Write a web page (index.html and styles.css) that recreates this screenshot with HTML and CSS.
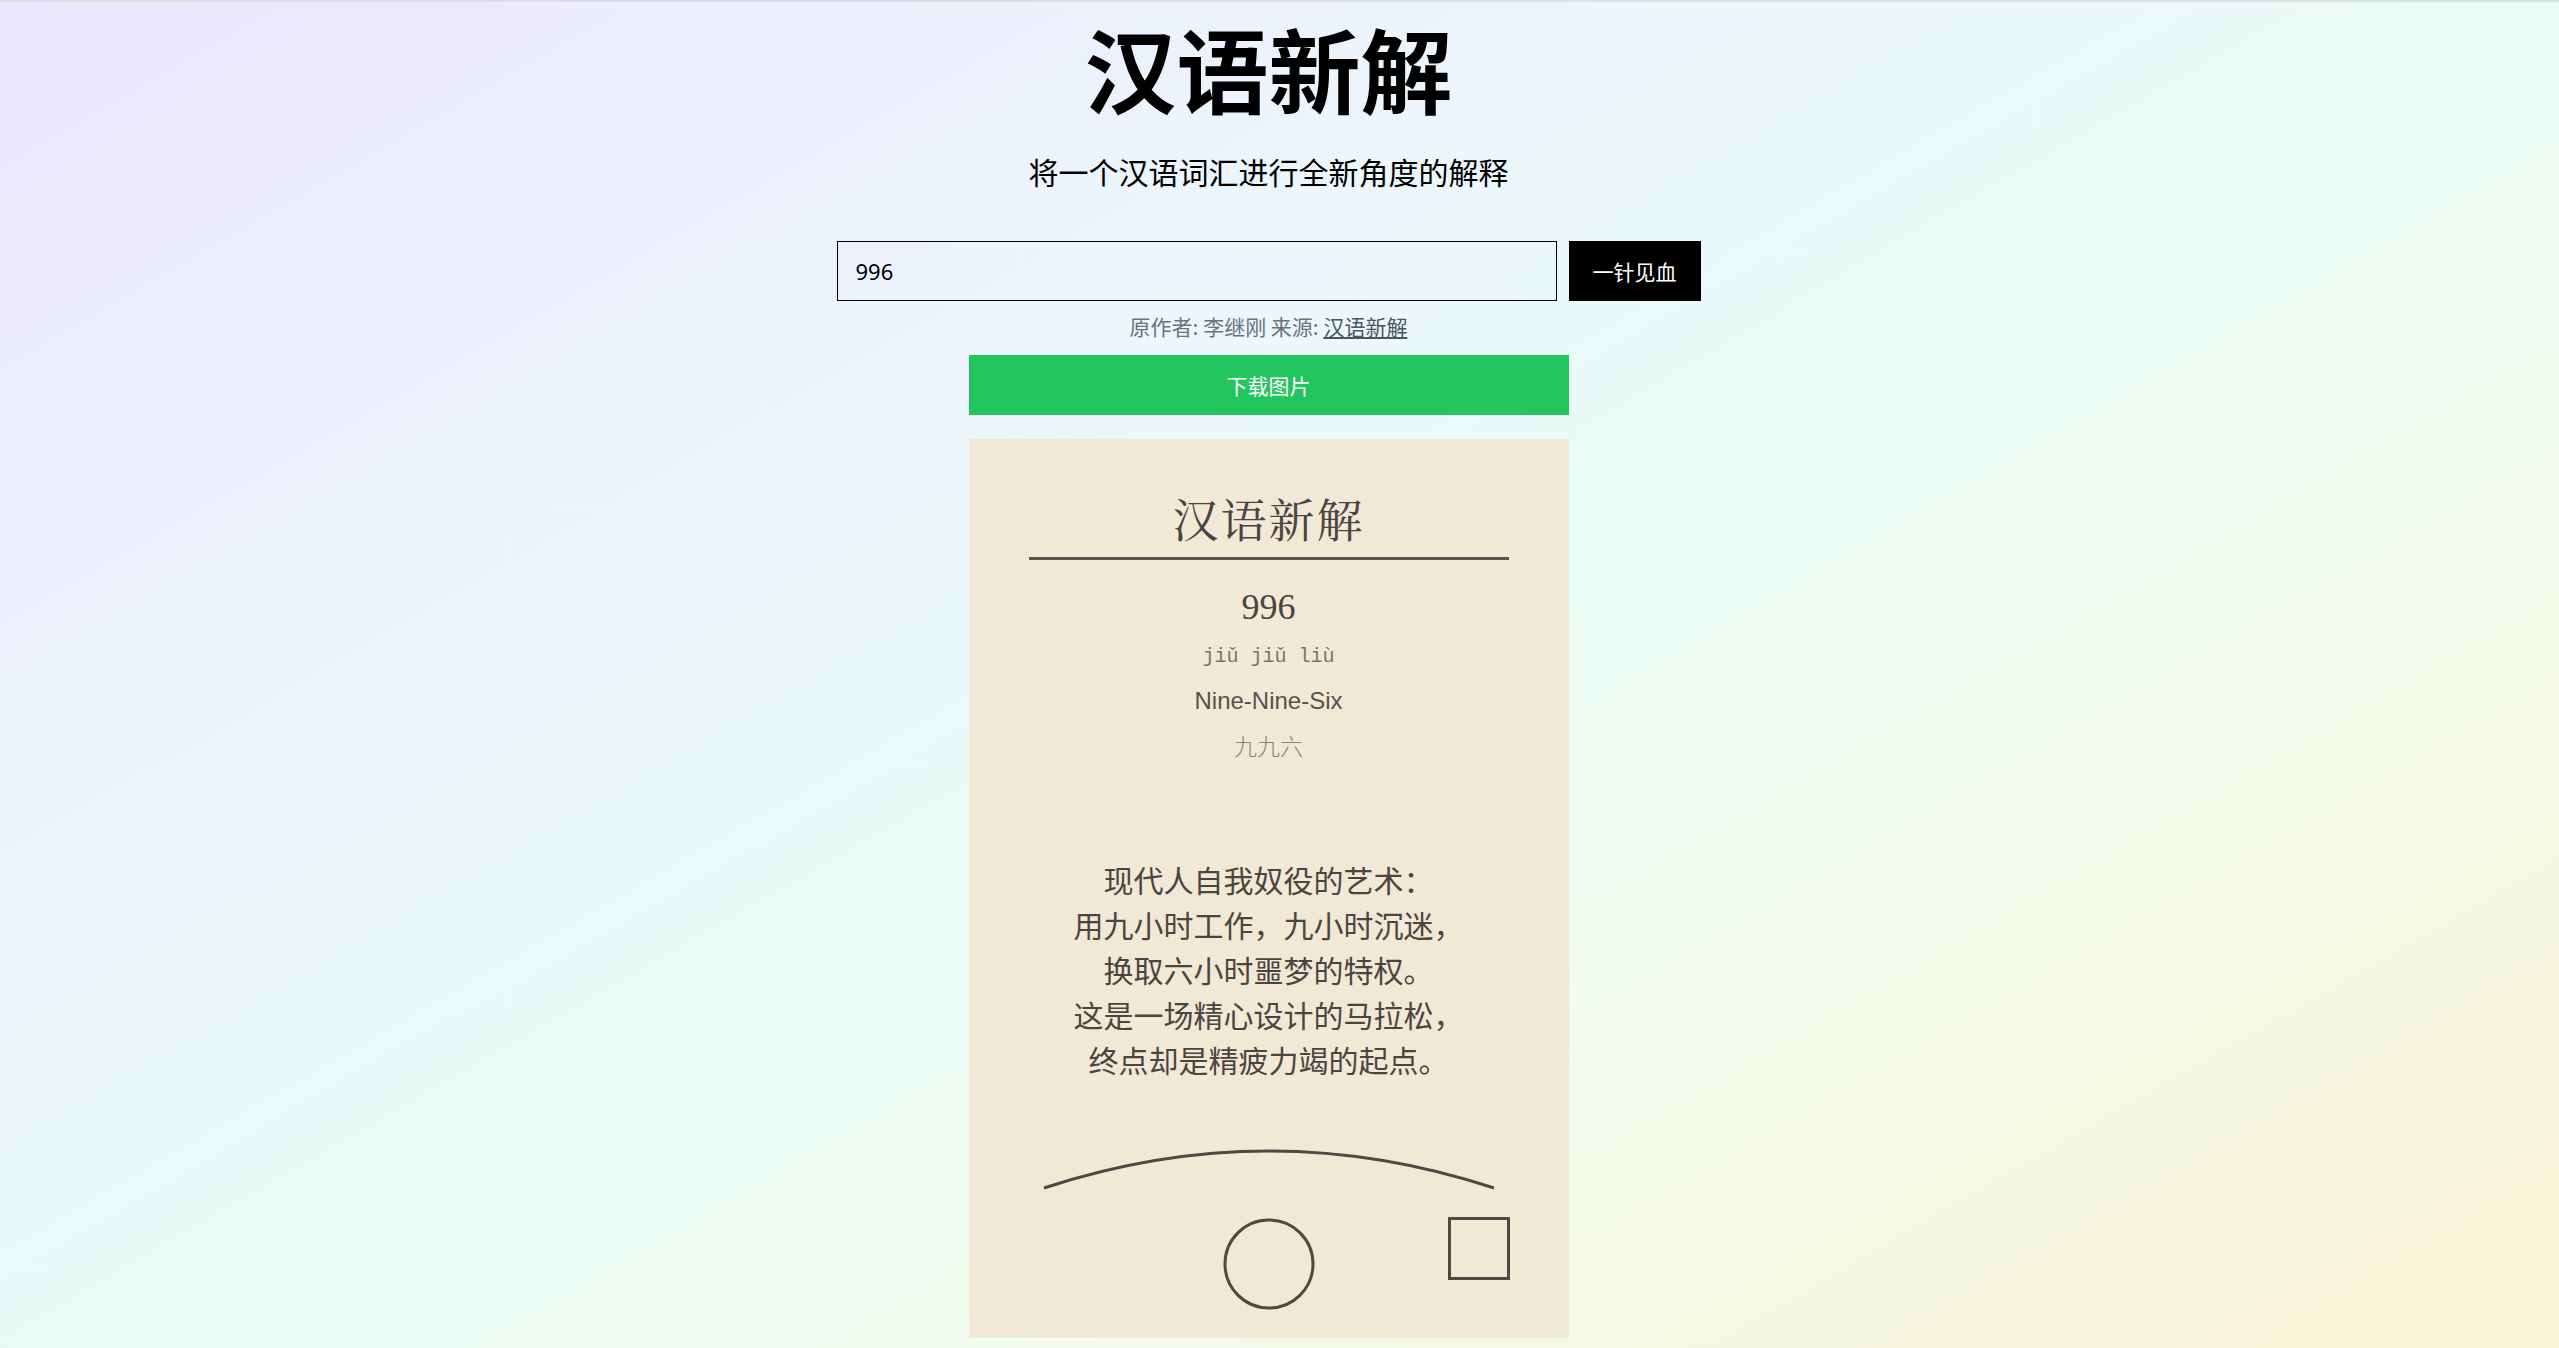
FILE: index.html
```html
<!DOCTYPE html>
<html lang="zh-CN">
<head>
<meta charset="utf-8">
<title>汉语新解</title>
<link rel="stylesheet" href="styles.css">
</head>
<body>
<main class="page">
  <h1 class="title">汉语新解</h1>
  <p class="subtitle">将一个汉语词汇进行全新角度的解释</p>
  <form class="search">
    <input class="search-input" type="text" value="996">
    <button class="search-btn" type="button">一针见血</button>
  </form>
  <p class="credit">原作者: 李继刚 来源: <a class="credit-link" href="#">汉语新解</a></p>
  <button class="download" type="button">下载图片</button>
  <article class="card">
    <h2 class="card-title">汉语新解</h2>
    <div class="word">996</div>
    <div class="pinyin">jiǔ jiǔ liù</div>
    <div class="english">Nine-Nine-Six</div>
    <div class="japanese">九九六</div>
    <p class="poem">现代人自我奴役的艺术：<br>用九小时工作，九小时沉迷，<br>换取六小时噩梦的特权。<br>这是一场精心设计的马拉松，<br>终点却是精疲力竭的起点。</p>
    <svg class="doodle" width="480" height="192" viewBox="0 0 480 192">
      <path d="M15 69 Q240 -5 465 69" fill="none" stroke="#4f4843" stroke-width="3"/>
      <circle cx="240" cy="145" r="44" fill="none" stroke="#4f4843" stroke-width="3"/>
      <rect x="420.5" y="99.5" width="59" height="60" fill="none" stroke="#4f4843" stroke-width="3"/>
    </svg>
  </article>
</main>
</body>
</html>
```

FILE: styles.css
```css
html {
  overflow-y: scroll;
}

::-webkit-scrollbar {
  width: 22px;
}

::-webkit-scrollbar-track {
  background: #f1f1f1;
}

::-webkit-scrollbar-thumb {
  background: #c1c1c1;
  border-left: 2px solid #f1f1f1;
}

body {
  margin: 0;
  padding-right: 22px;
  border-top: 2px solid #dddfe3;
  font-family: "Noto Sans CJK SC", "Noto Sans", sans-serif;
  background: linear-gradient(to bottom right, #ebe6fd 0%, #ecf5fc 30%, #ebfcf6 50%, #f2fbee 66%, #fdf4d2 100%);
  min-height: 100vh;
}

.page {
  display: flex;
  flex-direction: column;
  align-items: center;
  padding: 19px 0 142px;
}

.title {
  margin: 0;
  font-size: 92px;
  line-height: 1;
  font-weight: 700;
  color: #000;
}

.subtitle {
  margin: 43px 0 0;
  font-size: 30px;
  line-height: 1;
  color: #000;
}

.search {
  display: flex;
  gap: 12px;
  margin-top: 55px;
}

.search-input {
  box-sizing: border-box;
  width: 720px;
  height: 60px;
  padding: 0 18px;
  border: 1.5px solid #000;
  border-radius: 0;
  background: transparent;
  font-family: "Noto Sans", "Noto Sans CJK SC", sans-serif;
  font-size: 22px;
  color: #000;
  outline: none;
}

.search-btn {
  height: 60px;
  padding: 0 24px;
  border: 0;
  border-radius: 0;
  background: #000;
  color: #fff;
  font-family: "Noto Sans CJK SC", sans-serif;
  font-size: 21px;
}

.credit {
  margin: 15px 0 0;
  font-size: 21px;
  line-height: 1;
  color: #6b7280;
}

.credit-link {
  color: #4b5563;
  text-decoration: underline;
}

.download {
  width: 600px;
  height: 60px;
  margin-top: 18px;
  border: 0;
  border-radius: 0;
  background: #22c55e;
  color: #fff;
  font-family: "Noto Sans CJK SC", sans-serif;
  font-size: 21px;
}

.card {
  box-sizing: border-box;
  width: 600px;
  margin-top: 24px;
  padding: 54px 60px 27px;
  background: #f2e8d6;
  color: #4a4541;
  text-align: center;
}

.card-title {
  margin: 0;
  padding-bottom: 16px;
  border-bottom: 3px solid #5a524c;
  font-family: "KaiTi", "STKaiti", "Noto Serif CJK SC", "Noto Sans CJK SC", serif;
  font-size: 46px;
  line-height: 48px;
  font-weight: 400;
  letter-spacing: 2px;
  color: #4a4541;
}

.word {
  margin-top: 29px;
  font-family: "Liberation Serif", serif;
  font-size: 36px;
  line-height: 36px;
  color: #4a4541;
}

.pinyin {
  margin-top: 22px;
  font-family: "Liberation Mono", monospace;
  font-size: 20px;
  line-height: 20px;
  color: #7a7470;
}

.english {
  margin-top: 22px;
  font-family: "Liberation Sans", sans-serif;
  font-size: 24px;
  line-height: 24px;
  color: #57524e;
}

.japanese {
  margin-top: 20px;
  font-family: "Noto Sans CJK SC", sans-serif;
  font-weight: 300;
  font-size: 23px;
  line-height: 24px;
  color: #8a8480;
}

.poem {
  margin: 100px 0 0;
  font-family: "Noto Sans CJK SC", sans-serif;
  font-size: 30px;
  line-height: 45px;
  color: #4a4541;
}

.doodle {
  display: block;
  margin-top: 37px;
  overflow: visible;
}
```
